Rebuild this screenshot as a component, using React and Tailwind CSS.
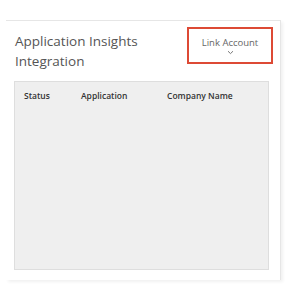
export default function App() {
  return (
    <div className="w-[298px] h-[295px] bg-white" style={{ fontFamily: '"Open Sans", sans-serif' }}>
      <div className="pt-[20px] pl-[6px]">
        <div className="w-[275px] h-[260px] flex flex-col border-t border-r border-[#e6e6e6] shadow-[2px_2px_3px_rgba(0,0,0,0.06)] pl-[8px] pr-[7px] pt-[6px] pb-[10px]">
          <div className="flex items-start justify-between">
            <h2 className="mt-[4px] ml-[1px] text-[13.5px] leading-[20px] text-[#555] font-normal">
              Application Insights
              <br />
              Integration
            </h2>
            <button className="w-[86px] h-[37px] border-2 border-[#dd4a35] flex flex-col items-center justify-center pt-[1px]">
              <span className="text-[9.5px] leading-[12px] text-[#666]">Link Account</span>
              <svg width="7" height="5" viewBox="0 0 7 5" className="mt-[1px]">
                <path d="M1 1.2 L3.5 3.6 L6 1.2" fill="none" stroke="#777" strokeWidth="1" />
              </svg>
            </button>
          </div>
          <div className="mt-[10px] mr-[4px] flex-1 bg-[#efefef] border border-[#dedede]">
            <div className="flex items-center h-[29px] text-[8.5px] font-semibold text-[#333]">
              <span className="ml-[9px] w-[57px]">Status</span>
              <span className="w-[86px]">Application</span>
              <span>Company Name</span>
            </div>
          </div>
        </div>
      </div>
    </div>
  );
}
